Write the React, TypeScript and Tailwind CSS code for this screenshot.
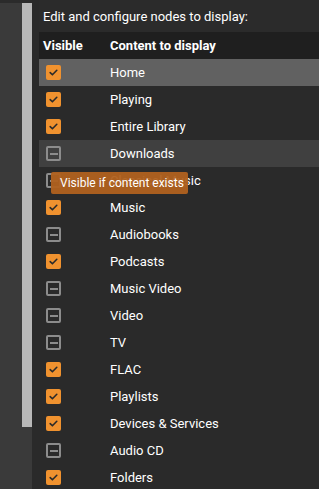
const rows: { label: string; on: boolean }[] = [
  { label: "Home", on: true },
  { label: "Playing", on: true },
  { label: "Entire Library", on: true },
  { label: "Downloads", on: false },
  { label: "Classical Music", on: false },
  { label: "Music", on: true },
  { label: "Audiobooks", on: false },
  { label: "Podcasts", on: true },
  { label: "Music Video", on: false },
  { label: "Video", on: false },
  { label: "TV", on: false },
  { label: "FLAC", on: true },
  { label: "Playlists", on: true },
  { label: "Devices & Services", on: true },
  { label: "Audio CD", on: false },
  { label: "Folders", on: true },
];

function Check({ on }: { on: boolean }) {
  if (on) {
    return (
      <span className="flex h-[15px] w-[15px] items-center justify-center rounded-[2px] bg-[#f0922f]">
        <svg width="11" height="11" viewBox="0 0 11 11" fill="none">
          <path d="M2.2 5.6 L4.4 7.8 L8.8 3.3" stroke="#2a2a2a" strokeWidth="1.6" strokeLinecap="round" strokeLinejoin="round" />
        </svg>
      </span>
    );
  }
  return (
    <span className="flex h-[15px] w-[15px] items-center justify-center rounded-[2px] border-2 border-[#8c8c8c]">
      <span className="h-[2px] w-[8px] bg-[#8c8c8c]" />
    </span>
  );
}

export default function App() {
  return (
    <div className="flex h-[489px] w-[319px] overflow-hidden bg-[#2b2b2b] font-['Roboto',sans-serif] text-[13px] text-white">
      <div className="mt-[3px] flex w-[32px] shrink-0 bg-[#3a3a3a]">
        <div className="ml-[22px] h-[424px] w-[10px] bg-[#b8b8b8]" />
      </div>
      <main className="flex flex-1 flex-col bg-[#2a2a2a] pl-[7px]">
        <div className="flex h-[32px] shrink-0 items-center bg-[#2b2b2b] pl-[4px] pt-[2px]">
          Edit and configure nodes to display:
        </div>
        <div className="flex h-[27px] shrink-0 items-center bg-[#1f1f1f] font-bold">
          <span className="w-[67px] pl-[4px]">Visible</span>
          <span className="pl-[4px]">Content to display</span>
        </div>
        {rows.map((r, i) => (
          <div
            key={r.label}
            className={
              "relative flex h-[27px] shrink-0 items-center " +
              (i === 0 ? "bg-[#616161]" : i === 3 ? "bg-[#404040]" : "")
            }
          >
            <span className="w-[67px] pl-[7px]">
              <Check on={r.on} />
            </span>
            <span className="whitespace-nowrap pl-[4px]">{r.label}</span>
            {r.label === "Classical Music" && (
              <div className="absolute left-[12px] top-[5px] flex h-[22px] w-[137px] items-center rounded-[2px] bg-[#b0611f]/95 pl-[9px] text-[12px] text-white">
                Visible if content exists
              </div>
            )}
          </div>
        ))}
      </main>
    </div>
  );
}
